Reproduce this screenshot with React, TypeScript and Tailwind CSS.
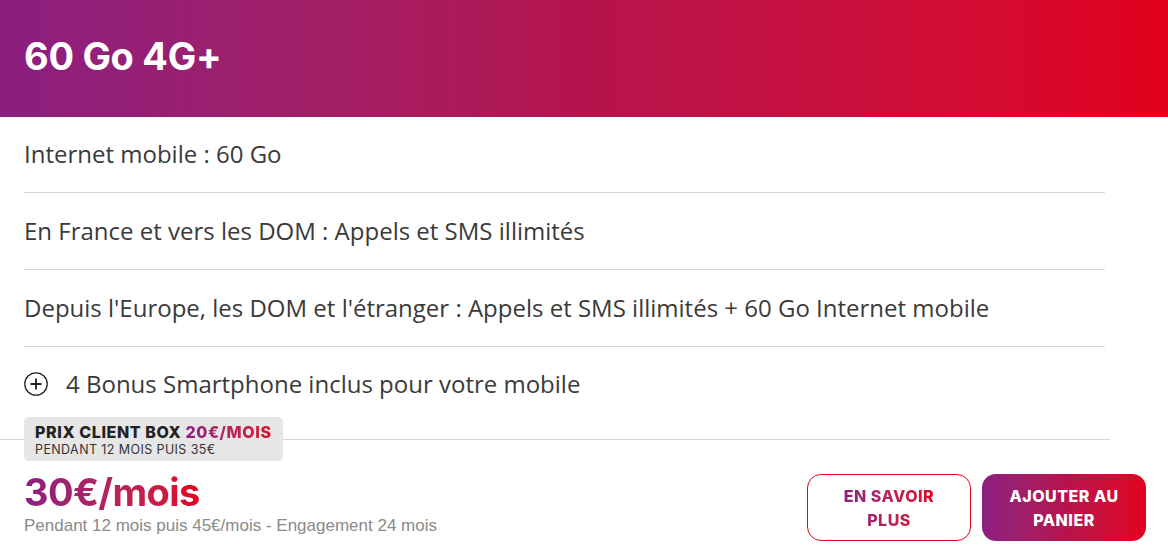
const rows = [
  "Internet mobile : 60 Go",
  "En France et vers les DOM : Appels et SMS illimités",
  "Depuis l'Europe, les DOM et l'étranger : Appels et SMS illimités + 60 Go Internet mobile",
];

const grad = "bg-gradient-to-r from-[#8c1e80] via-[#b5134d] to-[#e2001a]";

function Header() {
  return (
    <div className={`flex h-[117px] items-center px-6 pb-[6px] ${grad}`}>
      <h1 className="font-['Inter',sans-serif] text-[38px] font-bold leading-none tracking-[-0.3px] text-white">60 Go 4G+</h1>
    </div>
  );
}

function PlusIcon() {
  return (
    <svg width="24" height="24" viewBox="0 0 24 24" fill="none" className="shrink-0">
      <circle cx="12" cy="12" r="11.2" stroke="#222" strokeWidth="1.3" />
      <path d="M12 6.5v11M6.5 12h11" stroke="#222" strokeWidth="1.8" />
    </svg>
  );
}

function Features() {
  return (
    <div className="font-['Open_Sans',sans-serif] text-[24px] leading-[29px] text-[#3a3a3a]">
      {rows.map((r, i) => (
        <div
          key={r}
          className={`mx-6 w-[1081px] border-b border-[#d6d6d6] pb-[24px] ${i === 0 ? "pt-[22px]" : "pt-[23px]"}`}
        >
          {r}
        </div>
      ))}
      <div className="mx-6 flex items-center gap-[18px] pt-[22px] pb-[41px]">
        <PlusIcon />
        <span>4 Bonus Smartphone inclus pour votre mobile</span>
      </div>
    </div>
  );
}

function Pricing() {
  return (
    <div className="w-[1110px] border-t border-[#d6d6d6] pl-6">
      <div className="-mt-[23px] w-[259px] rounded-[5px] bg-[#e6e6e6] px-[11px] pt-[6px] pb-[4px] font-['Inter',sans-serif] uppercase">
        <div className="text-[16px] font-extrabold leading-[18px] tracking-[0.6px] text-[#222]">
          Prix client box{" "}
          <span className="bg-gradient-to-r from-[#8c1e80] to-[#e2001a] bg-clip-text text-transparent">20€/mois</span>
        </div>
        <div className="mt-[2px] text-[12.5px] leading-[14px] tracking-[0.4px] text-[#333]">Pendant 12 mois puis 35€</div>
      </div>
      <div className="mt-[11px] inline-block bg-gradient-to-r from-[#8c1e80] to-[#e2001a] bg-clip-text font-['Inter',sans-serif] text-[38px] font-bold leading-[40px] tracking-[-0.6px] text-transparent">
        30€/mois
      </div>
      <div className="mt-[4px] font-['Liberation_Sans',sans-serif] text-[17px] leading-[20px] text-[#8a8a8a]">
        Pendant 12 mois puis 45€/mois - Engagement 24 mois
      </div>
    </div>
  );
}

function Buttons() {
  return (
    <div className="flex gap-[11px] font-['Inter',sans-serif] text-[16px] font-extrabold leading-[24px] tracking-[0.5px]">
      <button className="flex h-[67px] w-[164px] items-center justify-center rounded-[14px] border border-[#e2001a] bg-white uppercase">
        <span className="bg-gradient-to-r from-[#8c1e80] to-[#e2001a] bg-clip-text text-center text-transparent">
          En savoir
          <br />
          plus
        </span>
      </button>
      <button className={`flex h-[67px] w-[164px] items-center justify-center rounded-[14px] text-center uppercase text-white ${grad}`}>
        Ajouter au
        <br />
        panier
      </button>
    </div>
  );
}

export default function App() {
  return (
    <div className="h-[560px] w-[1168px] overflow-hidden bg-white">
      <Header />
      <Features />
      <div className="relative">
        <Pricing />
        <div className="absolute right-[22px] top-[35px]">
          <Buttons />
        </div>
      </div>
    </div>
  );
}
